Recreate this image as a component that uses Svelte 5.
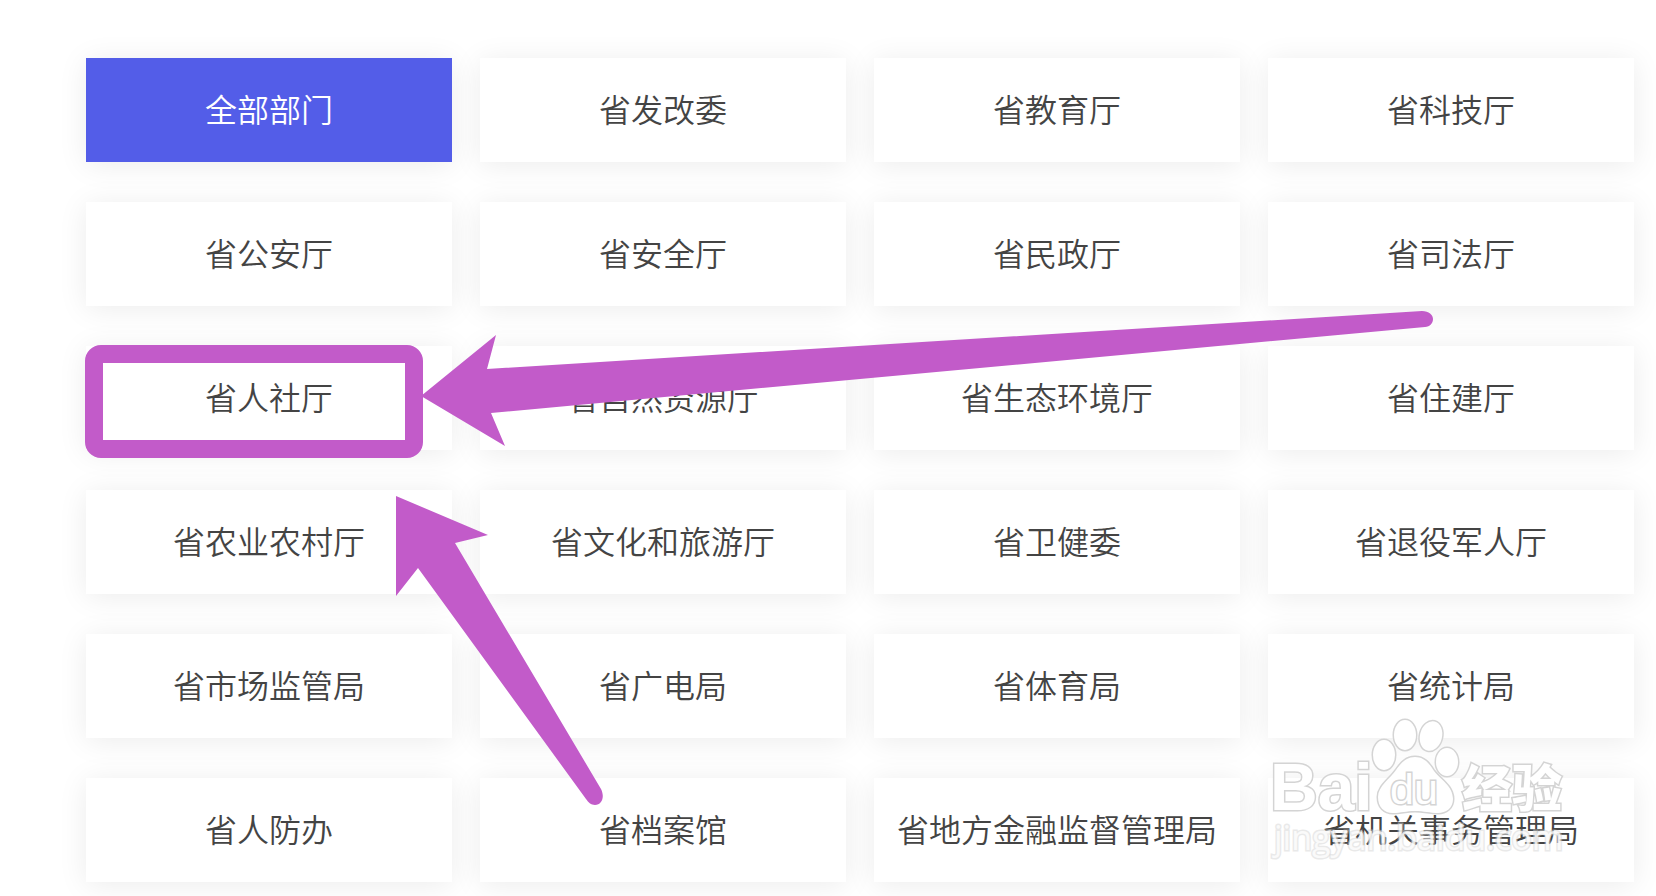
<script lang="ts">
  const departments = [
    '全部部门',
    '省发改委',
    '省教育厅',
    '省科技厅',
    '省公安厅',
    '省安全厅',
    '省民政厅',
    '省司法厅',
    '省人社厅',
    '省自然资源厅',
    '省生态环境厅',
    '省住建厅',
    '省农业农村厅',
    '省文化和旅游厅',
    '省卫健委',
    '省退役军人厅',
    '省市场监管局',
    '省广电局',
    '省体育局',
    '省统计局',
    '省人防办',
    '省档案馆',
    '省地方金融监督管理局',
    '省机关事务管理局'
  ];

  let selected = $state('全部部门');
</script>

<main class="page">
  <div class="departments">
    {#each departments as name}
      <button
        type="button"
        class="department"
        class:active={selected === name}
        aria-pressed={selected === name}
        onclick={() => (selected = name)}
      >
        {name}
      </button>
    {/each}
  </div>

  <div class="highlight"></div>

  <svg class="overlay" width="1656" height="896" viewBox="0 0 1656 896" aria-hidden="true">
    <g class="arrows">
      <path d="M421 396 L496 335 L487 369 L1422 311 C1429 311 1433 315 1433 319 C1433 323 1430 327 1425 327 L491 413 L505 446 Z" />
      <path d="M396 496 L488 535 L455 543 L601 789 C605 797 602 805 595 805 C591 805 588 802 586 799 L418 568 L396 596 Z" />
    </g>

    <g class="watermark">
      <text class="brand" x="1270" y="810">Bai</text>
      <ellipse cx="1384" cy="755" rx="11" ry="15" />
      <ellipse cx="1405" cy="735" rx="11" ry="15" />
      <ellipse cx="1431" cy="736" rx="11" ry="15" transform="rotate(14 1431 736)" />
      <ellipse cx="1447" cy="762" rx="11" ry="14" />
      <path d="M1415 757 C1424 757 1429 763 1434 771 C1440 779 1453 786 1453 799 C1453 808 1446 813 1438 813 C1430 813 1424 811 1415 811 C1406 811 1401 813 1393 813 C1384 813 1378 807 1378 797 C1378 786 1390 779 1396 770 C1401 763 1406 757 1415 757 Z" />
      <text class="du" x="1390" y="804">du</text>
      <text class="jingyan" x="1462" y="807">经验</text>
      <text class="site" x="1274" y="850">jingyan.baidu.com</text>
    </g>
  </svg>
</main>

<style>
  :global(body) {
    margin: 0;
    background-color: #fff;
    overflow: hidden;
  }

  .page {
    position: relative;
    font-family: 'Noto Sans CJK SC', sans-serif;
  }

  .departments {
    display: grid;
    grid-template-columns: repeat(4, 1fr);
    gap: 40px 28px;
    padding: 58px 22px 40px 86px;
  }

  .department {
    height: 104px;
    padding: 0 0 4px;
    border: none;
    background-color: #fff;
    box-shadow: 0 3px 28px rgba(0, 0, 0, 0.08);
    color: #444;
    font-family: inherit;
    font-size: 32px;
    font-weight: 350;
    line-height: 48px;
    cursor: pointer;
  }

  .department.active {
    background-color: #535de8;
    color: #fff;
  }

  .highlight {
    position: absolute;
    top: 345px;
    left: 85px;
    box-sizing: border-box;
    width: 338px;
    height: 113px;
    border: 18px solid #c25bc9;
    border-radius: 16px;
    pointer-events: none;
  }

  .overlay {
    position: absolute;
    top: 0;
    left: 0;
    pointer-events: none;
  }

  .arrows {
    fill: #c25bc9;
  }

  .watermark {
    fill: #fff;
    stroke: #d4d4d4;
    stroke-width: 3px;
    paint-order: stroke;
  }

  .brand {
    font: bold 66px 'Liberation Sans', sans-serif;
  }

  .du {
    font: 43px 'Liberation Sans', sans-serif;
  }

  .jingyan {
    font: 900 50px 'Noto Sans CJK SC', sans-serif;
  }

  .site {
    font: 34px 'Open Sans', sans-serif;
    fill-opacity: 0.8;
    stroke-opacity: 0.5;
  }
</style>
